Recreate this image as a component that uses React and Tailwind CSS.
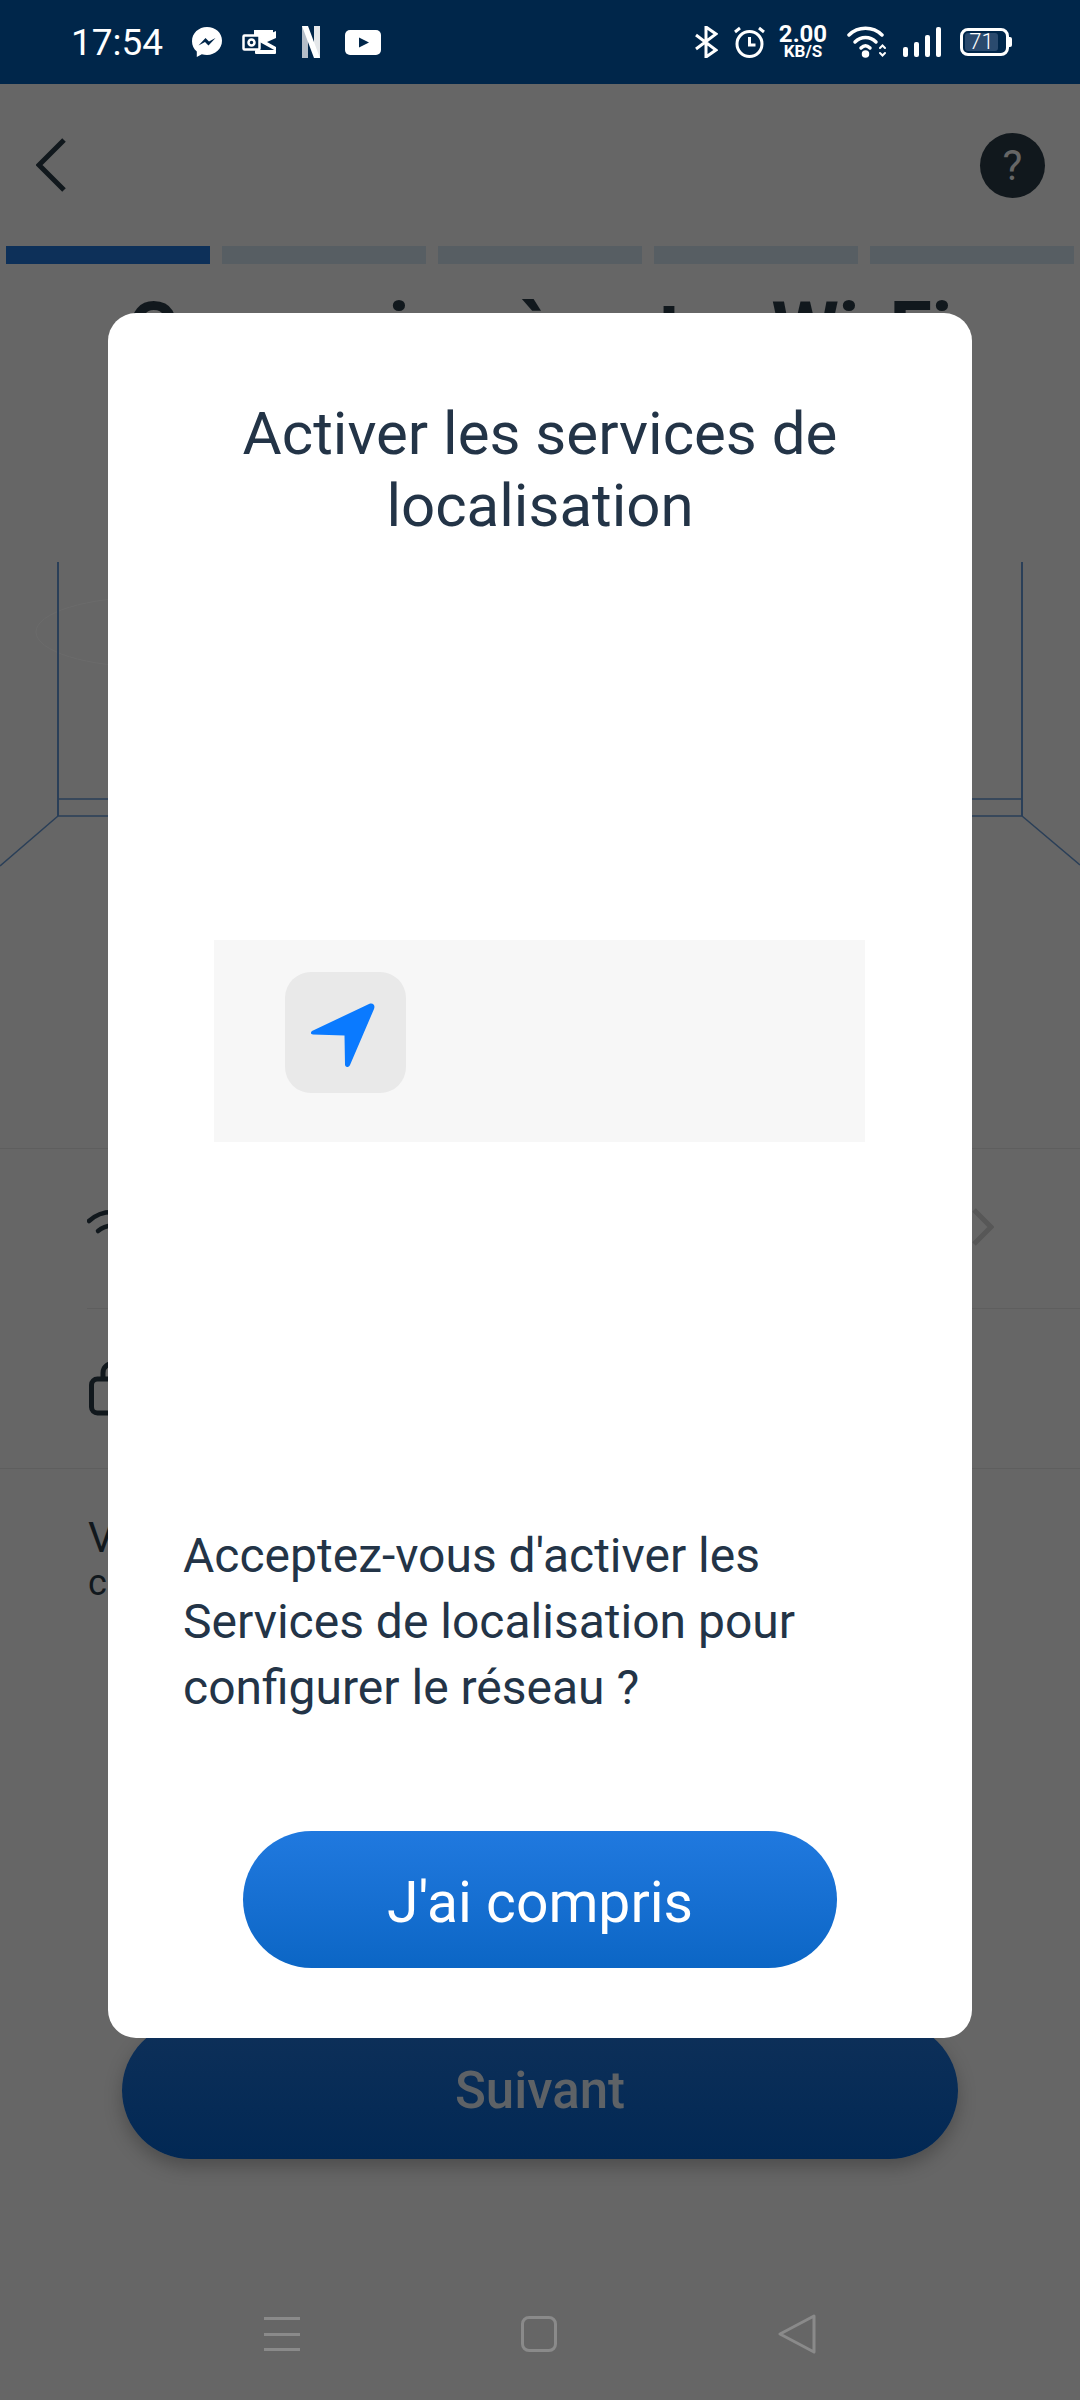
import React from "react";

const font = { fontFamily: "Roboto, sans-serif" };

const StatusLeft = () => (
  <div className="flex items-center">
    <span className="ml-[71px] w-[92px] text-[37px] leading-none font-normal text-white">17:54</span>
    <svg className="ml-[29px]" width="30" height="30" viewBox="0 0 30 30">
      <path d="M15 0C6.700 0 0 6.200 0 14.200c0 4.200 1.800 7.800 4.800 10.300V30l5-2.800c1.600.5 3.400.7 5.200.7 8.300 0 15-6.200 15-14.200S23.300 0 15 0z" fill="#fff" />
      <path d="M6.500 18.500l7-7.500 3.500 3.500 6.500-3.500-7 7.500-3.500-3.500z" fill="#00264a" />
    </svg>
    <svg className="ml-[20px]" width="34" height="26" viewBox="0 0 34 26">
      <rect x="12" y="1" width="19" height="8" fill="#fff" />
      <path d="M14 11l20-9v7l-9 4 9 5v4z" fill="#fff" />
      <rect x="13" y="21" width="21" height="4" rx="1" fill="#fff" />
      <rect x="1.500" y="6.500" width="16" height="14" rx="1" fill="#00264a" stroke="#fff" strokeWidth="2.500" />
      <circle cx="9.500" cy="13.500" r="3" fill="none" stroke="#fff" strokeWidth="2.500" />
    </svg>
    <svg className="ml-[26px]" width="18" height="32" viewBox="0 0 18 32">
      <rect x="0" y="0" width="6" height="32" fill="#b4bdc8" />
      <rect x="12" y="0" width="6" height="32" fill="#e4e7ea" />
      <path d="M0 0h6l12 32h-6z" fill="#fff" />
    </svg>
    <svg className="ml-[25px]" width="36" height="25" viewBox="0 0 36 25">
      <rect width="36" height="25" rx="5" fill="#fff" />
      <path d="M14 7.500l10 5-10 5z" fill="#00264a" />
    </svg>
  </div>
);

const StatusRight = () => (
  <div className="flex items-center text-white">
    <svg width="24" height="32" viewBox="0 0 24 32" fill="none" stroke="#fff" strokeWidth="3">
      <path d="M2 9l20 15-10 7V1l10 7L2 23" />
    </svg>
    <svg className="ml-[16px]" width="31" height="32" viewBox="0 0 31 32" fill="none" stroke="#fff" strokeWidth="3">
      <circle cx="15.500" cy="18" r="12.500" />
      <path d="M15.500 11v8h6M1 6l5-4M30 6l-5-4" />
    </svg>
    <div className="ml-[13px] flex w-[50px] flex-col items-center">
      <span className="text-[24px] leading-[19px] font-bold">2.00</span>
      <span className="text-[17px] leading-[15px] font-bold">KB/S</span>
    </div>
    <svg className="ml-[19px]" width="40" height="32" viewBox="0 0 40 32" fill="none" stroke="#fff" strokeWidth="3.500" strokeLinecap="round">
      <path d="M2 9C11 0 26 0 35 9" />
      <path d="M8 16c6-6 15-6 21 0" />
      <path d="M14 22c3-3 6-3 9 0" />
      <circle cx="18.500" cy="28" r="2" fill="#fff" />
      <path d="M33 22l2.500-2.500L38 22M33 27l2.500 2.500L38 27" strokeWidth="2" />
    </svg>
    <div className="ml-[16px] flex h-[30px] w-[38px] items-end justify-between">
      <div className="h-[10px] w-[5px] rounded-[2px] bg-white"></div>
      <div className="h-[15px] w-[5px] rounded-[2px] bg-white"></div>
      <div className="h-[22px] w-[5px] rounded-[2px] bg-white"></div>
      <div className="h-[30px] w-[5px] rounded-[2px] bg-white"></div>
    </div>
    <div className="ml-[19px] flex items-center">
      <div className="flex h-[28px] w-[49px] items-center rounded-[8px] border-[3px] border-white p-[2px]">
        <div className="flex h-full w-[33px] items-center justify-center rounded-[3px] bg-[#2a4a6e] text-[22px] leading-none font-light">71</div>
      </div>
      <div className="h-[10px] w-[3px] rounded-r-[2px] bg-white"></div>
    </div>
  </div>
);

const Room = () => (
  <svg className="block" width="1080" height="310" viewBox="0 0 1080 310" fill="none">
    <ellipse cx="150" cy="71" rx="114" ry="35" stroke="#6b6b6b" strokeWidth="1" />
    <path d="M58 1V255M1022 1V255" stroke="#2a3f58" strokeWidth="2" />
    <path d="M58 238H1022M58 255H1022" stroke="#2a3f58" strokeWidth="1.500" />
    <path d="M58 255L0 305M1022 255L1080 304" stroke="#2a3f58" strokeWidth="1.500" />
  </svg>
);

const App = () => {
  return (
    <div className="relative h-[2400px] w-[1080px] overflow-hidden bg-[#666666]" style={font}>
      <div className="flex h-[84px] items-center justify-between bg-[#00264a] pr-[68px]">
        <StatusLeft />
        <StatusRight />
      </div>

      <div className="flex h-[162px] items-center justify-between pr-[35px] pl-[36px]">
        <svg width="30" height="54" viewBox="0 0 30 54" fill="none" stroke="#11181d" strokeWidth="5">
          <path d="M28 2L3 27l25 25" />
        </svg>
        <div className="flex h-[65px] w-[65px] items-center justify-center rounded-full bg-[#11181d] text-[42px] text-[#666666]">?</div>
      </div>

      <div className="flex gap-[12px] px-[6px]">
        <div className="h-[18px] w-[204px] bg-[#0d3059]"></div>
        <div className="h-[18px] w-[204px] bg-[#575e63]"></div>
        <div className="h-[18px] w-[204px] bg-[#575e63]"></div>
        <div className="h-[18px] w-[204px] bg-[#575e63]"></div>
        <div className="h-[18px] w-[204px] bg-[#575e63]"></div>
      </div>

      <h1 className="mt-[31px] whitespace-nowrap text-center text-[77px] leading-[72px] font-bold text-[#11181d]">Connexion à votre Wi-Fi</h1>

      <div className="mt-[194px]">
        <Room />
      </div>

      <div className="mt-[277px] h-[160px] border-t border-[#5e5e5e] pt-[58px] pl-[87px]">
        <div className="flex items-center justify-between pr-[86px]">
          <svg width="50" height="40" viewBox="0 0 50 40" fill="none" stroke="#11181d" strokeWidth="4.500" strokeLinecap="round">
            <path d="M2 14C15 2 35 2 48 14" />
            <path d="M11 24c8-7 20-7 28 0" />
          </svg>
          <svg width="22" height="40" viewBox="0 0 22 40" fill="none" stroke="#575757" strokeWidth="5">
            <path d="M2 3l17 17L2 37" />
          </svg>
        </div>
      </div>

      <div className="ml-[87px] h-[160px] border-t border-[#5e5e5e]"></div>

      <div className="border-t border-[#5e5e5e] pt-[44px] pl-[88px] text-[#11181d]">
        <p className="text-[42px] leading-[50px]">V</p>
        <p className="text-[36px] leading-[40px]">c</p>
      </div>

      {/* cadenas de la ligne mot de passe */}
      <svg className="absolute top-[1360px] left-[89px]" width="60" height="56" viewBox="0 0 60 56" fill="none" stroke="#11181d" strokeWidth="5">
        <rect x="2.500" y="19" width="50" height="34" rx="6" />
        <path d="M14 19V13C14 6 20 3 27 3s13 3 13 10v6" />
      </svg>

      <div className="mt-[419px] ml-[122px] flex h-[137px] w-[836px] items-center justify-center rounded-full bg-gradient-to-b from-[#0e3059] to-[#022854] pt-[2px] text-[51px] font-medium text-[#5e6266] shadow-[0_8px_18px_rgba(0,0,0,0.25)]">
        Suivant
      </div>

      <div className="mt-[155px] flex items-center justify-center gap-[221px]">
        <div className="flex h-[36px] w-[36px] flex-col justify-between py-[1px]">
          <div className="h-[3px] bg-[#8a8a8a]"></div>
          <div className="h-[3px] bg-[#8a8a8a]"></div>
          <div className="h-[3px] bg-[#8a8a8a]"></div>
        </div>
        <div className="h-[36px] w-[36px] rounded-[8px] border-[3px] border-[#8a8a8a]"></div>
        <svg width="38" height="40" viewBox="0 0 38 40" fill="none" stroke="#8a8a8a" strokeWidth="3" strokeLinejoin="round">
          <path d="M36 2L2 20l34 18z" />
        </svg>
      </div>

      <div className="absolute top-[313px] left-[108px] flex h-[1725px] w-[864px] flex-col items-center rounded-[28px] bg-white">
        <h2 className="mt-[85px] w-[640px] text-center text-[60px] leading-[72px] text-[#233447]">Activer les services de localisation</h2>
        <div className="mt-[398px] mr-[2px] flex h-[202px] w-[651px] items-start bg-[#f7f7f7] pt-[32px] pl-[71px]">
          <div className="flex h-[121px] w-[121px] items-center justify-center rounded-[26px] bg-[#e9e9e9]">
            <svg className="mt-[4px] mr-[6px]" width="68" height="70" viewBox="0 0 68 70">
              <path d="M61 4L4 31c-2 1.500-1 3.500 1 3.500l31.500 1 .5 29c0 3 3.500 3.500 5 .5L66 9c1.500-4-1-6.500-5-5z" fill="#0a7aff" />
            </svg>
          </div>
        </div>
        <p className="mt-[381px] w-[714px] text-[48px] leading-[66px] text-[#233447]">Acceptez-vous d'activer les Services de localisation pour configurer le réseau ?</p>
        <button className="mt-[110px] flex h-[137px] w-[594px] items-center justify-center rounded-full bg-gradient-to-b from-[#2079df] to-[#0b66c5] pt-[6px] text-[57px] text-white">
          J'ai compris
        </button>
      </div>
    </div>
  );
};

export default App;
